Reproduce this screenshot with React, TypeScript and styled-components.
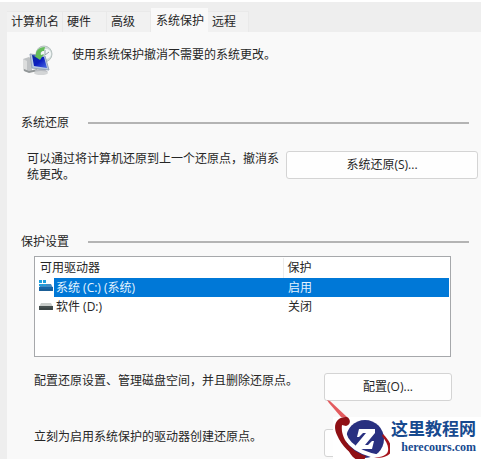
import React from 'react';
import styled, { createGlobalStyle } from 'styled-components';

const GlobalStyle = createGlobalStyle`
  * { box-sizing: border-box; }
  html, body, #root { height: 100%; }
  body {
    margin: 0;
    background: #eeeeee;
    color: #262626;
    font: 12px/16px "Open Sans", "Noto Sans CJK SC", sans-serif;
  }
  button, table { font: inherit; color: inherit; }
`;

const Dialog = styled.main`
  position: relative;
  display: flex;
  flex-direction: column;
  min-height: 100%;
  overflow: hidden;
  border-top: 2px solid #ffffff;
`;

const TabBar = styled.div`
  display: flex;
  align-items: flex-end;
  height: 30px;
  padding: 0 8px 0 7px;
`;

const Tab = styled.button<{ $width: number; $selected?: boolean }>`
  width: ${p => p.$width}px;
  height: ${p => (p.$selected ? 24 : 21)}px;
  padding: ${p => (p.$selected ? '1px 0 0 5px' : '0 0 0 4px')};
  border: 1px solid ${p => (p.$selected ? '#f9f9f9' : '#e9e9e9')};
  border-bottom: 0;
  border-left-width: 0;
  background: ${p => (p.$selected ? '#f9f9f9' : '#f1f1f1')};
  text-align: left;
  white-space: nowrap;
`;

const Panel = styled.section`
  flex: 1;
  display: flex;
  flex-direction: column;
  margin-left: 7px;
  padding: 12px 3px 3px 14px;
  background: #f9f9f9;
`;

const Intro = styled.div`
  display: flex;
  gap: 16px;
  height: 71px;

  p { margin: 3px 0 0; }
`;

const Heading = styled.h2`
  display: flex;
  align-items: center;
  gap: 19px;
  margin: 0 9px 0 0;
  font-size: 12px;
  line-height: 16px;
  font-weight: 400;

  &::after {
    content: '';
    flex: 1;
    height: 2px;
    background: #b4b4b4;
  }
`;

const RestoreRow = styled.div`
  display: flex;
  align-items: flex-start;
  justify-content: space-between;
  gap: 4px;
  margin: 20px 0 51px 6px;

  p { flex: 1; margin: 0; }
`;

const PushButton = styled.button<{ $width: number }>`
  flex: none;
  width: ${p => p.$width}px;
  height: 28px;
  padding: 0;
  border: 1px solid #d4d4d4;
  border-radius: 3px;
  background: #fefefe;
`;

const DriveList = styled.div`
  height: 101px;
  margin: 6px 27px 0 13px;
  padding: 1px 1px 0 4px;
  border: 1px solid #a6a8ab;
  background: #ffffff;
`;

const DriveTable = styled.table`
  width: 100%;
  table-layout: fixed;
  border-collapse: collapse;
  text-align: left;

  th, td { padding: 0; font-weight: 400; white-space: nowrap; }
  th { height: 20px; padding-left: 1px; }
  th + th { width: 166px; padding-left: 4px; border-left: 1px solid #ececec; }
  td + td { padding-left: 5px; }
`;

const DriveRow = styled.tr<{ $selected?: boolean }>`
  height: 19px;
  color: ${p => (p.$selected ? '#e3f3ff' : 'inherit')};

  td + td { background: ${p => (p.$selected ? '#0078d7' : 'transparent')}; }
  span { background: ${p => (p.$selected ? '#0078d7' : 'transparent')}; }
`;

const DriveName = styled.div`
  display: flex;
  align-items: center;
  gap: 1px;

  svg { flex: none; }
  span { flex: 1; height: 19px; padding-left: 2px; line-height: 19px; }
`;

const ActionRow = styled.div`
  display: flex;
  align-items: flex-start;
  justify-content: space-between;
  margin: 16px 26px 0 13px;

  & + & { margin-top: 28px; }
  p { margin: 0; }
`;

const Watermark = styled.a`
  position: absolute;
  right: 0;
  bottom: 0;
  display: flex;
  align-items: flex-end;
  color: #174a8f;
  text-decoration: none;
  white-space: nowrap;
`;

const BrandText = styled.span`
  display: flex;
  flex-direction: column;
  align-items: flex-end;
  width: 91px;
  height: 43px;
  padding-right: 5px;
  background: #ffffff;

  strong { font: 700 17px/22px "Noto Sans CJK SC", sans-serif; }
  small { font: 700 12px/16px "Liberation Serif", serif; }
`;

const ComputerIcon = () => (
  <svg width="35" height="35" viewBox="0 0 35 35" aria-hidden="true">
    <defs>
      <linearGradient id="screen" x1="0" y1="0" x2="1" y2="1">
        <stop offset="0" stopColor="#0c2c9e" />
        <stop offset=".5" stopColor="#0a1cc0" />
        <stop offset="1" stopColor="#4a6ce4" />
      </linearGradient>
    </defs>
    <path d="M2 15l6-2 3 2v12l-5 1-4-2z" fill="#bfc2c4" />
    <path d="M2 15l4 2v11l-4-2z" fill="#dcdddd" />
    <path d="M3 25l5 2 8-2 1 2-9 2-5-2z" fill="#929798" />
    <path d="M14 26l8-2 5 4-3 2-9-1z" fill="#b8bbc0" />
    <ellipse cx="20" cy="29" rx="7" ry="2" fill="#d3d5d6" />
    <circle cx="23" cy="10" r="8" fill="#cfdad8" stroke="#b7c2c1" />
    <circle cx="25" cy="10" r="5" fill="#f3f7f7" />
    <path d="M9 10l15 2 4 14-17-2z" fill="#b6c8df" stroke="#93a3b8" />
    <path d="M11 11l12 2 3 11-13-2z" fill="url(#screen)" />
    <path d="M15 12c-1-5 3-9 9-9l-1 4c-3 0-4 2-3 4l3-1-4 6-6-4z" fill="#65bd5a" />
    <path d="M24 6v5l4-3" fill="none" stroke="#92a3a7" />
  </svg>
);

const DriveIcon = ({ system = false }: { system?: boolean }) => (
  <svg width="14" height="16" viewBox="0 2 14 16" aria-hidden="true">
    <path d="M2 6h10l2 4H0z" fill={system ? '#438bc2' : '#c9cdcb'} />
    <path d="M0 9h14v4H0z" fill={system ? '#1866a7' : '#454e4e'} />
    <path d="M1 12h12" stroke={system ? '#1e5685' : '#323b3c'} />
    {system && <path d="M0 2h3v3H0zM4 2h3v3H4zM0 6h3v2H0zM4 6h3v2H4z" fill="#20a1de" />}
  </svg>
);

const BrandMark = () => (
  <svg width="67" height="61" viewBox="0 0 67 61" aria-hidden="true">
    <path d="M10 18h57v43H10z" fill="#ffffff" />
    <path d="M4 1l3 1 17 16h-6L6 4z" fill="#e35b5e" />
    <circle cx="42" cy="40" r="19" fill="#293080" />
    <path d="M23 26C17 38 29 53 57 58" fill="none" stroke="#ffffff" strokeWidth="4" />
    <path d="M24 18C14 17 9 26 14 36c5 12 15 21 27 25l2-4C29 53 17 40 19 26l4 1c5-1 5-7 1-9z" fill="#8f1015" />
    <path d="M25 49c5 4 10 7 17 8l-1 4h-7c-5-3-8-7-9-12z" fill="#8f1015" />
    <path d="M60 35c6 6 10 13 8 18-2 4-8 6-17 6 8-1 13-3 14-7 1-5-2-10-6-15z" fill="#a5141c" />
    <path d="M36 30h16v4L42 46h3l4-4h2l-2 8H33v-4l10-12h-3l-4 4h-2z" fill="#ffffff" />
  </svg>
);

export default function App() {
  return (
    <>
      <GlobalStyle />
      <Dialog>
        <TabBar role="tablist">
          <Tab role="tab" $width={56}>计算机名</Tab>
          <Tab role="tab" $width={44}>硬件</Tab>
          <Tab role="tab" $width={44}>高级</Tab>
          <Tab role="tab" aria-selected $selected $width={57}>系统保护</Tab>
          <Tab role="tab" $width={41}>远程</Tab>
        </TabBar>
        <Panel role="tabpanel">
          <Intro>
            <ComputerIcon />
            <p>使用系统保护撤消不需要的系统更改。</p>
          </Intro>
          <Heading>系统还原</Heading>
          <RestoreRow>
            <p>可以通过将计算机还原到上一个还原点，撤消系统更改。</p>
            <PushButton $width={192}>系统还原(S)...</PushButton>
          </RestoreRow>
          <Heading>保护设置</Heading>
          <DriveList>
            <DriveTable>
              <thead>
                <tr><th scope="col">可用驱动器</th><th scope="col">保护</th></tr>
              </thead>
              <tbody>
                <DriveRow $selected aria-selected>
                  <td><DriveName><DriveIcon system /><span>系统 (C:) (系统)</span></DriveName></td>
                  <td>启用</td>
                </DriveRow>
                <DriveRow>
                  <td><DriveName><DriveIcon /><span>软件 (D:)</span></DriveName></td>
                  <td>关闭</td>
                </DriveRow>
              </tbody>
            </DriveTable>
          </DriveList>
          <ActionRow>
            <p>配置还原设置、管理磁盘空间，并且删除还原点。</p>
            <PushButton $width={128}>配置(O)...</PushButton>
          </ActionRow>
          <ActionRow>
            <p>立刻为启用系统保护的驱动器创建还原点。</p>
            <PushButton $width={128} aria-label="创建" />
          </ActionRow>
        </Panel>
        <Watermark href="#">
          <BrandMark />
          <BrandText>
            <strong>这里教程网</strong>
            <small>herecours.com</small>
          </BrandText>
        </Watermark>
      </Dialog>
    </>
  );
}
